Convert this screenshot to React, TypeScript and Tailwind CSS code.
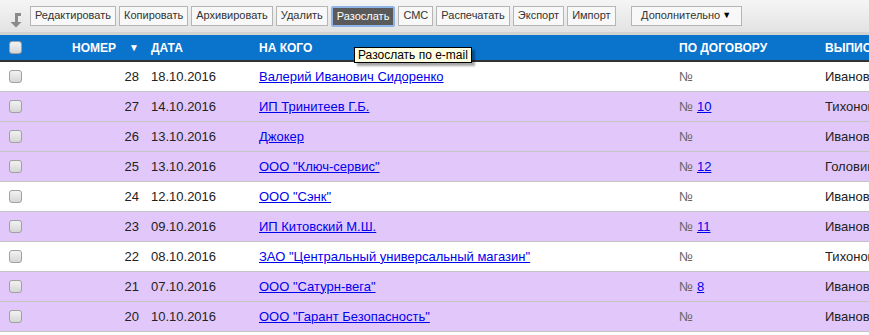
import React from 'react'

type Row = {
  id: number
  date: string
  name: string
  contract?: string
  author: string
  alt: boolean
}

const rows: Row[] = [
  { id: 28, date: '18.10.2016', name: 'Валерий Иванович Сидоренко', author: 'Иванов', alt: false },
  { id: 27, date: '14.10.2016', name: 'ИП Тринитеев Г.Б.', contract: '10', author: 'Тихонов', alt: true },
  { id: 26, date: '13.10.2016', name: 'Джокер', author: 'Иванов', alt: true },
  { id: 25, date: '13.10.2016', name: 'ООО "Ключ-сервис"', contract: '12', author: 'Головин', alt: true },
  { id: 24, date: '12.10.2016', name: 'ООО "Сэнк"', author: 'Иванов', alt: false },
  { id: 23, date: '09.10.2016', name: 'ИП Китовский М.Ш.', contract: '11', author: 'Иванов', alt: true },
  { id: 22, date: '08.10.2016', name: 'ЗАО "Центральный универсальный магазин"', author: 'Тихонов', alt: false },
  { id: 21, date: '07.10.2016', name: 'ООО "Сатурн-вега"', contract: '8', author: 'Иванов', alt: true },
  { id: 20, date: '10.10.2016', name: 'ООО "Гарант Безопасность"', author: 'Иванов', alt: true },
]

const buttons = ['Редактировать', 'Копировать', 'Архивировать', 'Удалить', 'Разослать', 'СМС', 'Распечатать', 'Экспорт', 'Импорт']

const cols = 'grid grid-cols-[30px_113px_108px_420px_146px_200px]'

function Checkbox() {
  return <div className="h-[13px] w-[13px] rounded-[3px] border border-[#a0a0a0] bg-gradient-to-b from-[#f2f2f2] to-[#d6d6d6]" />
}

export default function App() {
  return (
    <div className="relative h-[335px] w-[869px] overflow-hidden bg-white font-['Liberation_Sans',Arial,sans-serif]">
      {/* toolbar */}
      <div className="flex h-[35px] items-center border-b-[3px] border-[#d3d3d3] bg-gradient-to-b from-[#f5f5f5] to-[#e3e3e3] pl-[10px]">
        <svg width="12" height="16" viewBox="0 0 12 16" className="mr-[8px] mt-[8px] shrink-0">
          <path d="M5 1h6v3H8v6h3.5L6 15.5 0.5 10H5z" fill="#8a8a8a" />
        </svg>
        <div className="flex gap-[3px]">
          {buttons.map((b) =>
            b === 'Разослать' ? (
              <div
                key={b}
                className="flex h-[21px] items-center rounded-[2px] border-2 border-[#8fb4e6] bg-[#5a5a5a] px-[4px] text-[11px] text-white"
              >
                {b}
              </div>
            ) : (
              <div
                key={b}
                className="flex h-[20px] items-center border border-[#b5b5b5] bg-[#f8f8f8] px-[4px] text-[11px] text-[#333]"
              >
                {b}
              </div>
            ),
          )}
          <div className="ml-[12px] flex h-[20px] w-[111px] items-center justify-center border border-[#b5b5b5] bg-[#f8f8f8] text-[11px] text-[#333]">
            Дополнительно<span className="ml-[2px] text-[9px] text-black">▼</span>
          </div>
        </div>
      </div>

      {/* header */}
      <div className={`${cols} h-[27px] items-center border-b-2 border-[#333] bg-[#0a74cc] text-[12px] font-bold text-white`}>
        <div className="pl-[9px]">
          <Checkbox />
        </div>
        <div className="flex items-center justify-end pr-[4px]">
          НОМЕР
          <span className="ml-[13px] text-[10px]">▼</span>
        </div>
        <div className="pl-[8px]">ДАТА</div>
        <div className="pl-[8px]">НА КОГО</div>
        <div className="pl-[8px]">ПО ДОГОВОРУ</div>
        <div className="whitespace-nowrap pl-[8px]">ВЫПИСАЛ</div>
      </div>

      {/* rows */}
      {rows.map((r) => (
        <div
          key={r.id}
          className={`${cols} h-[30px] items-center border-b border-[#c4c4c4] text-[13px] text-[#222] ${r.alt ? 'bg-[#e2c8fa]' : 'bg-white'}`}
        >
          <div className="pl-[9px]">
            <Checkbox />
          </div>
          <div className="pr-[4px] text-right">{r.id}</div>
          <div className="pl-[8px]">{r.date}</div>
          <div className="pl-[8px]">
            <span className="text-[#0000ee] underline">{r.name}</span>
          </div>
          <div className="pl-[8px] text-[#666]">
            №{r.contract && <span className="ml-[4px] text-[#0000ee] underline">{r.contract}</span>}
          </div>
          <div className="whitespace-nowrap pl-[8px]">{r.author}</div>
        </div>
      ))}

      {/* tooltip */}
      <div className="absolute left-[354px] top-[47px] border border-black bg-[#ffffe1] px-[3px] text-[12px] leading-[14px] text-black shadow-[3px_3px_2px_rgba(0,0,0,0.35)]">
        Разослать по e-mail
      </div>
    </div>
  )
}
